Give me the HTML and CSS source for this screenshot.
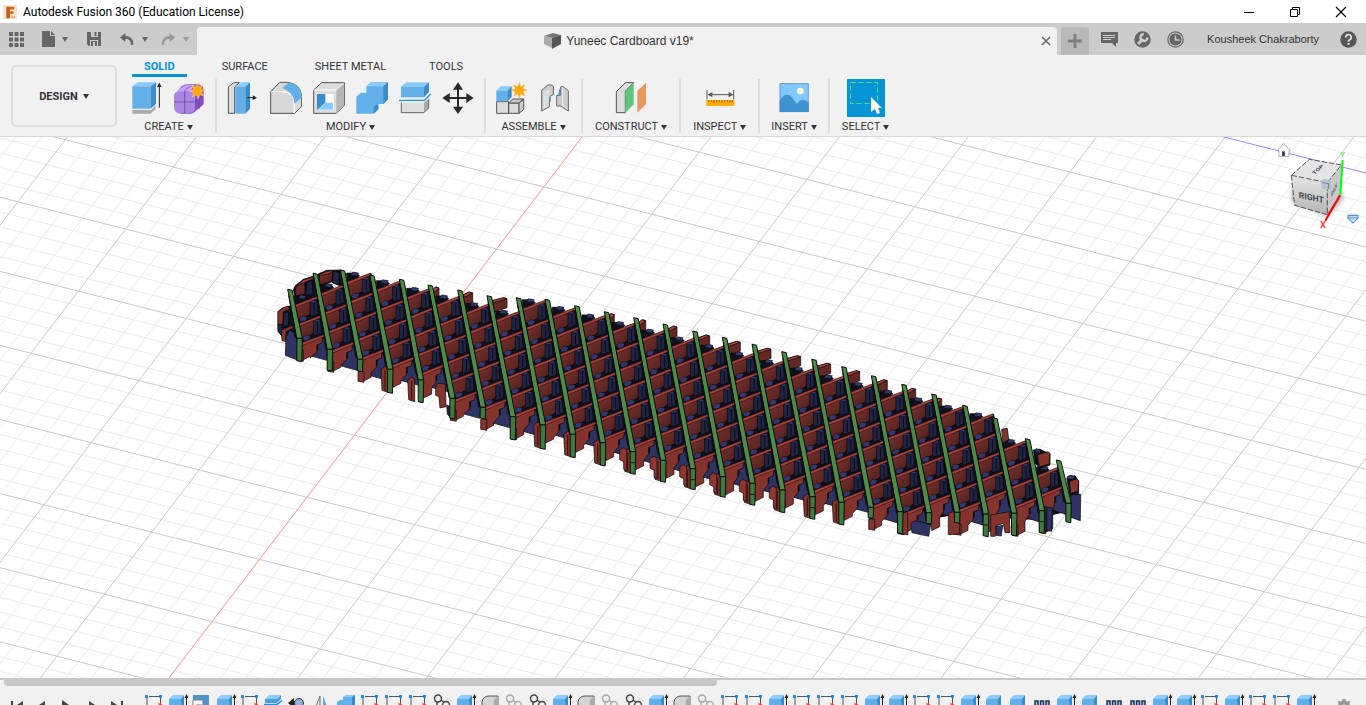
FILE: index.html
```html
<!DOCTYPE html>
<html lang="en">
<head>
<meta charset="utf-8">
<title>Autodesk Fusion 360 (Education License)</title>
<link rel="stylesheet" href="styles.css">
</head>
<body>
<header class="titlebar">
  <svg class="logo" viewBox="0 0 16 16"><rect width="16" height="16" fill="#fbe3cd"/><path d="M4 2h9v3H8v2h4v3H8v5H4z" fill="#d2691a"/><path d="M4 2h3v13H4z" fill="#b8601c"/><path d="M9 13h5v2H9z" fill="#f0a868"/></svg>
  <h1 class="app-name">Autodesk Fusion 360 (Education License)</h1>
  <div class="window-buttons">
    <button class="window-button" aria-label="Minimize"><svg viewBox="0 0 12 12"><path d="M1 6.5h10" stroke="#000"/></svg></button>
    <button class="window-button" aria-label="Restore"><svg viewBox="0 0 12 12" fill="none" stroke="#000"><path d="M1.5 3.5h7v7h-7zM3.500 3V1.500h7v7H9"/></svg></button>
    <button class="window-button" aria-label="Close"><svg viewBox="0 0 12 12"><path d="M1 1l10 10M11 1L1 11" stroke="#000" stroke-width="1.100"/></svg></button>
  </div>
</header>

<div class="tabstrip">
  <div class="quick">
    <button class="quick-button" aria-label="Data panel"><svg width="15" height="15" viewBox="0 0 15 15" fill="#666"><path d="M0 0h4v4H0zM5.500 0h4v4h-4zM11 0h4v4h-4zM0 5.500h4v4H0zM5.500 5.500h4v4h-4zM11 5.500h4v4h-4zM0 11h4v4H0zM5.500 11h4v4h-4zM11 11h4v4h-4z"/></svg></button>
    <button class="quick-button file" aria-label="File"><svg width="13" height="16" viewBox="0 0 13 16" fill="#666"><path d="M0 0h8v5h5v11H0zM9 0l4 4H9z"/></svg><span class="caret"></span></button>
    <button class="quick-button save" aria-label="Save"><svg width="14" height="14" viewBox="0 0 14 14"><path d="M0 0h14v14H2l-2-2z" fill="#666"/><path d="M4 0h7v5H4zM3 8h8v6H3z" fill="#ccc"/><path d="M7.500 0h2v4h-2zM4 9h6v5H4z" fill="#666"/><path d="M6 10h2v4H6z" fill="#ccc"/></svg></button>
    <button class="quick-button undo" aria-label="Undo"><svg width="14" height="12" viewBox="0 0 14 12"><path d="M5.500 0L0 4.500 5.500 9V6C9 5.500 11 8 11 12h2.300C13.800 6 10 3 5.500 3z" fill="#666"/></svg><span class="caret"></span></button>
    <button class="quick-button redo" aria-label="Redo"><svg width="14" height="12" viewBox="0 0 14 12"><path d="M8.500 0L14 4.500 8.500 9V6C5 5.500 3 8 3 12H.7C.2 6 4 3 8.500 3z" fill="#999"/></svg><span class="caret"></span></button>
  </div>
  <div class="doc-tab">
    <svg class="doc-icon" width="17" height="16" viewBox="0 0 17 16"><path d="M0 3L9 0l8 2-9 3z" fill="#777"/><path d="M0 3l8 2v10L0 11z" fill="#aaa"/><path d="M8 5l9-3v9l-9 5z" fill="#555"/></svg>
    <span class="doc-name">Yuneec Cardboard v19*</span>
    <button class="doc-close" aria-label="Close document"><svg width="10" height="10" viewBox="0 0 10 10"><path d="M1 1l8 8M9 1L1 9" stroke="#666" stroke-width="1.500"/></svg></button>
  </div>
  <button class="new-tab" aria-label="New design"><svg width="14" height="14" viewBox="0 0 14 14"><path d="M7 0v14M0 7h14" stroke="#808080" stroke-width="3"/></svg></button>
  <div class="account">
    <button class="round" aria-label="Comments"><svg width="17" height="16" viewBox="0 0 17 16"><path d="M0 1h17v11h-2v4l-4-4H0z" fill="#666"/><path d="M2 4.500h12M2 6.500h12M2 8.500h8" stroke="#ccc"/></svg></button>
    <button class="round" aria-label="Extensions"><svg width="17" height="17" viewBox="0 0 17 17"><circle cx="8.500" cy="8.500" r="8.200" fill="#666"/><path d="M4 13l5-5" stroke="#ccc" stroke-width="3"/><path d="M9.800 3a3.500 3.500 0 1 0 3.700 3.500" fill="none" stroke="#ccc" stroke-width="2.500"/></svg></button>
    <button class="round" aria-label="Job status"><svg width="17" height="17" viewBox="0 0 17 17"><circle cx="8.500" cy="8.500" r="7.700" fill="none" stroke="#666" stroke-width="1.200"/><circle cx="8.500" cy="8.500" r="6.100" fill="#666"/><path d="M8.500 4.500v4.500h4" fill="none" stroke="#ccc" stroke-width="1.500"/></svg></button>
    <button class="user">Kousheek Chakraborty</button>
    <button class="round" aria-label="Help"><svg width="17" height="17" viewBox="0 0 17 17"><circle cx="8.500" cy="8.500" r="8.200" fill="#555"/><path d="M5.800 6.500a2.700 2.700 0 1 1 4 2.200q-1.300.7-1.300 2M8.500 12v2" fill="none" stroke="#ddd" stroke-width="1.900"/></svg></button>
  </div>
</div>

<div class="ribbon">
  <button class="workspace">DESIGN <span class="caret"></span></button>
  <div class="ribbon-main">
    <nav class="ribbon-tabs">
      <button class="ribbon-tab active">SOLID</button>
      <button class="ribbon-tab">SURFACE</button>
      <button class="ribbon-tab">SHEET METAL</button>
      <button class="ribbon-tab">TOOLS</button>
    </nav>
    <div class="groups">
      <section class="group">
        <div class="tools">
          <button class="tool" aria-label="Extrude"><svg viewBox="393 240 96 108"><path d="M397 330h56l14-13v10l-16 14h-54z" fill="#aaa"/><path d="M397 324h52v5h-52z" fill="#e8e8e8"/><path d="M397 259l16-12h55l-16 12z" fill="#8acbff"/><path d="M397 259h55v67h-55z" fill="#63afe8"/><path d="M452 259l16-12v65l-16 14z" fill="#398bc9"/><path d="M478 323v-68" stroke="#222" stroke-width="3"/><path d="M478 248l7 13h-14z" fill="#222"/></svg></button>
          <button class="tool" aria-label="Create form"><svg viewBox="522 240 96 108"><path d="M523 285l22-26q7-6 18-6h30q18 0 18 20v40l-28 24q-5 4-10 4h-30q-20 0-20-22z" fill="#8250c0"/><path d="M523 283q2-10 25-11h24q13 0 13 15v34q0 18-17 18h-28q-17 0-17-18z" fill="#a986e4"/><path d="M530 275l20-17q10-5 34-3l-12 17z" fill="#cba2ff"/><path d="M523 306h60l27-20M554 272v68M554 272l20-16M585 284l22-18M597 277v50" fill="none" stroke="#60369b" stroke-width="2"/><path d="M592 247l4 13 12-7-5 13 14 4-13 6 8 12-13-4-4 14-6-13-13 6 5-13-13-5 13-5-6-13 13 6z" fill="#ffaa08" stroke="#fff4dd" stroke-width="1"/></svg></button>
        </div>
        <button class="group-name">CREATE<span class="caret"></span></button>
      </section>
      <section class="group">
        <div class="tools">
          <button class="tool" aria-label="Press pull"><svg viewBox="684 240 96 108"><path d="M688 261l16-13h17l-14 13v79h-19z" fill="#ddd" stroke="#555" stroke-width="3"/><path d="M709 260l17-13h27l-14 13z" fill="#8acbff"/><path d="M709 260h30v81h-30z" fill="#63afe8"/><path d="M739 260l14-13v79l-14 15z" fill="#398bc9"/><path d="M745 293h19" stroke="#222" stroke-width="3"/><path d="M774 293l-13-7v14z" fill="#222"/></svg></button>
          <button class="tool" aria-label="Fillet"><svg viewBox="813 240 96 108"><path d="M815 275l27-28h24q39 5 42 42v30l-21 21h-72z" fill="#d8d8d8" stroke="#555" stroke-width="3"/><path d="M817 275h35q34 3 34 36v28" fill="none" stroke="#fff" stroke-width="4"/><path d="M849 264l20-16q37 5 40 44l-22 19q-5-38-38-47z" fill="#63afe8"/></svg></button>
          <button class="tool" aria-label="Shell"><svg viewBox="942 240 96 108"><path d="M944 270l24-22h68v68l-24 24h-68z" fill="#ddd" stroke="#555" stroke-width="3"/><path d="M1012 270l23-21v67l-23 23z" fill="#b5b5b5"/><path d="M944 270h68l22-21" fill="none" stroke="#fff" stroke-width="3"/><path d="M954 282h50v48h-50z" fill="#fff"/><path d="M954 282h25v26l-25 22z" fill="#398bc9"/><path d="M979 308h23v21h-46z" fill="#8acbff"/></svg></button>
          <button class="tool" aria-label="Combine"><svg viewBox="1071 240 96 108"><path d="M1072 290l14-12h16v-19l14-12h51v51l-14 14h-15v16l-14 13h-52z" fill="#63afe8"/><path d="M1102 259l14-12h51l-14 12z" fill="#8acbff"/><path d="M1153 259l14-12v51l-14 14zM1124 321l14-10v17l-14 13z" fill="#398bc9"/></svg></button>
          <button class="tool" aria-label="Split body"><svg viewBox="1200 240 96 108"><path d="M1207 308h68v30h-68z" fill="#ddd"/><path d="M1275 308l14-10v25l-14 15z" fill="#aaa"/><path d="M1207 307v31h68l14-14v-26" fill="none" stroke="#666" stroke-width="3"/><path d="M1206 260l16-13h68l-15 13z" fill="#8acbff"/><path d="M1206 260h69v32h-69z" fill="#63afe8"/><path d="M1275 260l15-13v28l-15 17z" fill="#398bc9"/><path d="M1200 301h77l18-19" fill="none" stroke="#1c92e8" stroke-width="4"/></svg></button>
          <button class="tool" aria-label="Move"><svg viewBox="9 240 96 108"><path d="M57 260v66M25 294h66" stroke="#2a2a2a" stroke-width="6"/><path d="M57 247l15 22H42zM57 342l15-22H42zM10 294l22-15v30zM104 294l-22-15v30z" fill="#2a2a2a"/></svg></button>
        </div>
        <button class="group-name">MODIFY<span class="caret"></span></button>
      </section>
      <section class="group">
        <div class="tools">
          <button class="tool" aria-label="New component"><svg viewBox="171 240 96 108"><path d="M173 305h36v35h-36zM209 309h31v31h-31z" fill="#ddd" stroke="#555" stroke-width="3"/><path d="M209 309l12-12h33l-14 12zM240 309l14-12v32l-14 11z" fill="#ccc" stroke="#555" stroke-width="3"/><path d="M172 272l13-13h32l-12 13z" fill="#8acbff"/><path d="M172 272h33v32h-33z" fill="#63afe8"/><path d="M205 272l13-13v32l-13 13z" fill="#398bc9"/><path d="M241 246l4 14 13-7-6 13 14 4-14 5 7 14-14-7-4 14-5-14-13 7 6-14-14-5 14-4-7-13 14 7z" fill="#ffaa08"/></svg></button>
          <button class="tool" aria-label="Joint"><svg viewBox="300 240 96 108"><path d="M308 271l20-17q14 0 15 6v24l-12 6v30l-23 13z" fill="#ccc" stroke="#666" stroke-width="3"/><path d="M313 274l18-5v20l-4 31-14 7z" fill="#ddd"/><path d="M388 272l-17-13-6 2v24l-12 2v31h12l23 15z" fill="#ccc" stroke="#666" stroke-width="3"/><path d="M371 263v55l15 9" fill="none" stroke="#fff" stroke-width="2"/><path d="M334 305v-14M361 286v-18M356 282h10" stroke="#1c92e8" stroke-width="3"/></svg></button>
        </div>
        <button class="group-name">ASSEMBLE<span class="caret"></span></button>
      </section>
      <section class="group">
        <div class="tools">
          <button class="tool" aria-label="Construct plane"><svg viewBox="528 240 96 108"><path d="M532 275l28-27h24l-25 25v65h-27z" fill="#ddd" stroke="#555" stroke-width="3"/><path d="M559 273l25-25v65l-25 25z" fill="#5cc57b"/><path d="M595 273l26-25v65l-26 25z" fill="#e59860"/></svg></button>
        </div>
        <button class="group-name">CONSTRUCT<span class="caret"></span></button>
      </section>
      <section class="group">
        <div class="tools">
          <button class="tool" aria-label="Measure"><svg viewBox="794 240 96 108"><path d="M803 270v28M883 270v28M812 284h62" stroke="#555" stroke-width="3"/><path d="M805 284l14-8v16zM882 284l-14-8v16z" fill="#555"/><path d="M801 300h84v18h-84z" fill="#ffaa08"/><path d="M808 300v6M816 300v6M824 300v9M832 300v6M840 300v6M848 300v9M856 300v6M864 300v6M872 300v9M879 300v6" stroke="#7a5300" stroke-width="2"/></svg></button>
        </div>
        <button class="group-name">INSPECT<span class="caret"></span></button>
      </section>
      <section class="group">
        <div class="tools">
          <button class="tool" aria-label="Insert image"><svg viewBox="1015 240 96 108"><path d="M1020 250h87v86h-87z" fill="#80c8ff"/><path d="M1020 302q22-35 44 0l8 10q16-24 35-4v28h-87z" fill="#3d92cf"/><circle cx="1082" cy="273" r="10" fill="#ffffd0"/><path d="M1021 251h85v84h-85z" fill="none" stroke="#4f8fbd" stroke-width="2"/></svg></button>
        </div>
        <button class="group-name">INSERT<span class="caret"></span></button>
      </section>
      <section class="group">
        <div class="tools">
          <button class="tool selected" aria-label="Select"><svg viewBox="0 0 38 38"><path d="M3.500 3.500h27v21h-27z" fill="none" stroke="#5fd977" stroke-dasharray="5 3"/><path d="M24 18v15l4-3 2 5 3-1-2-5h4z" fill="#fff"/></svg></button>
        </div>
        <button class="group-name">SELECT<span class="caret"></span></button>
      </section>
    </div>
  </div>
</div>

<main class="viewport">
  <svg class="scene" viewBox="0 137 1366 541" preserveAspectRatio="xMidYMid slice" role="img" aria-label="Cardboard lattice model">
    <defs>
      <linearGradient id="slat" x1="0" y1="0" x2="1" y2="1"><stop offset="0" stop-color="#80352e"/><stop offset="1" stop-color="#451b19"/></linearGradient>
      <linearGradient id="cubeFace" x1="0" y1="0" x2="0" y2="1"><stop offset="0" stop-color="#e6e6e6"/><stop offset="1" stop-color="#b4b4b4"/></linearGradient>
      <filter id="soft" x="-20%" y="-20%" width="140%" height="150%"><feGaussianBlur stdDeviation="9"/></filter>
    </defs>
    <g id="grid"></g>
    <g id="model" stroke-linejoin="round"></g>
    <g id="viewcube" transform="translate(900 0) scale(.3333)">
      <path d="M1178 600l104 44 44-50-20-40h-120z" fill="#555" filter="url(#soft)" opacity=".8"/>
      <path d="M1174 526l54-48 96 17-42 53z" fill="#e4e4e4"/>
      <path d="M1174 526l108 22v96l-98-28z" fill="url(#cubeFace)"/>
      <path d="M1282 548l42-53-4 92-38 57z" fill="#c9c9c9"/>
      <path d="M1174 526l54-48 96 17-42 53zM1174 526l10 90 98 28v-96M1282 644l38-57" fill="none" stroke="#555" stroke-width="3" stroke-dasharray="16 6"/>
      <path d="M1263 542l10-6 20 4v22l-7 8-21-4z" fill="#b4c0d4" opacity=".9"/><path d="M1268 548l18 3v16" fill="none" stroke="#567" stroke-width="2"/>
      <text class="cube-label" transform="matrix(1 .2 0 1 1196 594)">RIGHT</text>
      <text class="cube-small" transform="matrix(.7 -.6 .5 .4 1243 524)">TOP</text>
      <text class="cube-small" transform="matrix(.3 -.55 0 1 1294 592)">BACK</text>
      <path d="M1328 480l-7 104" stroke="#0f0" stroke-width="6"/><path d="M1320 586l-44 76" stroke="#f00" stroke-width="6"/>
      <text class="axis-y" x="1320" y="471">Y</text><text class="axis-x" x="1260" y="683">X</text>
      <path d="M1133 452l18-22 20 22h-4v18h-30v-18z" fill="#fff" stroke="#888" stroke-width="2"/><path d="M1146 454h9v14h-9z" fill="#445"/>
      <path d="M1344 646h30v9l-15 15-15-15z" fill="#b5daf7" stroke="#3f80b8" stroke-width="3"/><path d="M1344 654h30" stroke="#3f80b8" stroke-width="2"/>
    </g>
  </svg>
</main>

<footer class="timeline">
  <div class="scroll-thumb"></div>
  <div class="timeline-row">
    <div class="playback">
      <button class="play" aria-label="Go to start"><svg viewBox="0 0 14 14"><path d="M1 1h2v12H1zM13 1v12L4 7z"/></svg></button>
      <button class="play" aria-label="Step back"><svg viewBox="0 0 14 14"><path d="M10 1v12L1 7z"/></svg></button>
      <button class="play" aria-label="Play"><svg viewBox="0 0 14 14"><path d="M2 0v14L12 7z"/></svg></button>
      <button class="play" aria-label="Step forward"><svg viewBox="0 0 14 14"><path d="M4 1v12l9-6z"/></svg></button>
      <button class="play" aria-label="Go to end"><svg viewBox="0 0 14 14"><path d="M11 1h2v12h-2zM1 1v12l9-6z"/></svg></button>
    </div>
    <div class="features" id="features"></div>
    <button class="settings" aria-label="Timeline settings"><svg width="16" height="16" viewBox="0 0 16 16"><circle cx="8" cy="8" r="4.500" fill="none" stroke="#999" stroke-width="4"/><path d="M8 0v16M0 8h16M2.300 2.300l11.400 11.400M13.700 2.300L2.300 13.700" stroke="#999" stroke-width="2.500" stroke-dasharray="3 100"/><path d="M8 0v3" stroke="#999" stroke-width="3"/></svg></button>
  </div>
</footer>
<script src="viewport.js"></script>
</body>
</html>
```

FILE: styles.css
```css
* { box-sizing: border-box; }
body {
  margin: 0;
  height: 100vh;
  overflow: hidden;
  display: flex;
  flex-direction: column;
  background: #fff;
  color: #333;
  font-family: Roboto, "Liberation Sans", sans-serif;
  font-size: 11px;
}
button {
  border: 0;
  padding: 0;
  background: none;
  color: inherit;
  font: inherit;
}
svg { display: block; }
.caret {
  display: inline-block;
  border: 3px solid transparent;
  border-top: 5px solid currentColor;
  border-bottom: 0;
}

.titlebar {
  flex: none;
  height: 23px;
  display: flex;
  align-items: center;
  padding-left: 3px;
}
.logo { width: 14px; height: 16px; }
.app-name {
  margin: 0 0 0 6px;
  color: #000;
  font-size: 12px;
  font-weight: 400;
}
.window-buttons {
  display: flex;
  margin-left: auto;
  margin-right: 2px;
}
.window-button {
  width: 46px;
  height: 20px;
  display: flex;
  align-items: center;
  justify-content: center;
}
.window-button svg { width: 12px; height: 12px; }

.tabstrip {
  flex: none;
  height: 32px;
  display: flex;
  align-items: flex-end;
  background: #ccc;
  font-family: "Liberation Sans", sans-serif;
}
.quick {
  width: 197px;
  height: 32px;
  display: flex;
  align-items: center;
  padding-left: 9px;
  color: #666;
}
.quick-button {
  display: flex;
  align-items: center;
  gap: 7px;
}
.file { margin-left: 18px; }
.save { margin-left: 19px; }
.undo { margin-left: 19px; gap: 8px; }
.redo { margin-left: 13px; gap: 8px; color: #999; }
.doc-tab {
  flex: 1;
  height: 28px;
  display: flex;
  align-items: center;
  justify-content: center;
  position: relative;
  background: #f1f1f1;
  border-radius: 4px 4px 0 0;
  font-size: 12px;
}
.doc-name { margin-left: 5px; margin-right: 16px; }
.doc-close {
  position: absolute;
  right: 6px;
  top: 9px;
}
.new-tab {
  width: 28px;
  height: 28px;
  margin-left: 4px;
  display: flex;
  align-items: center;
  justify-content: center;
  background: #b8b8b8;
  border-radius: 4px 4px 0 0;
}
.account {
  height: 32px;
  display: flex;
  align-items: center;
  gap: 16px;
  padding: 0 9px 0 12px;
}
.user { padding: 0 8px 0 7px; margin-right: -3px; }

.ribbon {
  flex: none;
  height: 82px;
  display: flex;
  background: #f1f1f1;
  border-bottom: 1px solid #d8d8d8;
}
.workspace {
  width: 106px;
  height: 62px;
  margin: 10px 14px 0 11px;
  display: flex;
  align-items: center;
  justify-content: center;
  gap: 5px;
  border: 2px solid #ddd;
  border-radius: 5px;
  font-weight: 700;
}
.ribbon-tabs {
  display: flex;
  gap: 23px;
}
.ribbon-tab {
  height: 22px;
  padding: 3px 12px 0;
  border-bottom: 3px solid transparent;
}
.ribbon-tab:last-child { padding-left: 8px; }
.ribbon-tab.active {
  margin-left: 1px;
  color: #0696d7;
  border-bottom-color: #0696d7;
  font-weight: 700;
}
.groups {
  display: flex;
  margin-top: 2px;
}
.group {
  height: 54px;
  padding: 0 12px;
  display: flex;
  flex-direction: column;
  align-items: center;
  border-right: 2px solid #ddd;
}
.group:nth-child(-n+3) { padding: 0 10px; }
.group:first-child { padding: 0 9px 0 0; }
.group:nth-last-child(2) { padding: 0 11px; }
.group:last-child { border-right: 0; }
.tools {
  flex: none;
  height: 38px;
  display: flex;
  align-items: center;
  gap: 11px;
}
.tool svg { width: 32px; height: 36px; }
.tool.selected { background: #0696d7; }
.tool.selected svg { width: 38px; height: 38px; }
.group-name {
  flex: none;
  display: flex;
  align-items: center;
  gap: 3px;
  height: 14px;
  margin-top: 3px;
  line-height: 14px;
}

.viewport {
  flex: 1;
  min-height: 0;
  background: #fff;
}
.scene { width: 100%; height: 100%; }
.cube-label { font: 700 26px Roboto, sans-serif; fill: #444c58; }
.cube-small { font: 700 22px Roboto, sans-serif; fill: #444c58; }
.axis-y { font: 700 24px Roboto, sans-serif; fill: #5fee5f; }
.axis-x { font: 700 28px Roboto, sans-serif; fill: #f44; }

.timeline {
  flex: none;
  height: 27px;
  overflow: hidden;
  background: #f1f1f1;
  border-top: 2px solid #c8c8c8;
}
.scroll-thumb {
  width: 52.2%;
  height: 6px;
  margin-left: 4px;
  background: #c8c8c8;
  border-radius: 0 0 4px 4px;
}
.timeline-row {
  display: flex;
  align-items: flex-start;
  padding: 8px 14px 0 10px;
}
.playback {
  display: flex;
  gap: 11px;
  padding-top: 6px;
}
.play svg { width: 14px; height: 14px; fill: #444; }
.features {
  display: flex;
  flex: 1;
  margin-left: 18px;
}
.feature { width: 24px; }
.feature svg { width: 20px; height: 20px; margin-left: 2px; }
.settings { padding-top: 5px; }
```

FILE: viewport.js
```js
const NS = 'http://www.w3.org/2000/svg';

function poly(parent, points, fill, stroke = '#08080c', width = 0.7) {
  const p = document.createElementNS(NS, 'polygon');
  p.setAttribute('points', points.map(q => q.map(n => n.toFixed(1)).join()).join(' '));
  p.setAttribute('fill', fill);
  if (stroke) {
    p.setAttribute('stroke', stroke);
    p.setAttribute('stroke-width', width);
  }
  parent.appendChild(p);
}

function line(parent, x1, y1, x2, y2, color) {
  const l = document.createElementNS(NS, 'line');
  Object.entries({ x1, y1, x2, y2, stroke: color }).forEach(([k, v]) => l.setAttribute(k, v));
  parent.appendChild(l);
}

/* Ground grid: five minor cells to each major cell */
const grid = document.getElementById('grid');
function gridLines(major) {
  for (let k = -25; k <= 65; k++) {
    if ((k % 5 === 0) !== major) continue;
    const x = 582 + 25.73 * k;
    line(grid, x, 137, x - 413, 678, k === 0 ? '#ff8f8f' : major ? '#cacaca' : '#ececec');
  }
  for (let k = -5; k <= 62; k++) {
    if ((k % 5 === 0) !== major) continue;
    const c = -173.3 + 14.82 * k;
    line(grid, 0, c, 1366, c + 346.3, k === 0 ? '#8f8fff' : major ? '#cacaca' : '#ececec');
  }
}
gridLines(false);
gridLines(true);

/* Green ribs: top x, top y, bend x, bend y, bottom y */
const ribs = [
  [290.7, 289.3, 299.3, 338.3, 361.7], [316, 273.3, 329.7, 349.3, 371], [343.3, 270, 360, 359.3, 371.7],
  [372.7, 275, 390, 369.3, 393.3], [402.3, 279.3, 420.7, 380, 402.7], [431, 285, 452.3, 398.3, 419],
  [460.7, 290, 482.7, 407.3, 419], [490, 295.7, 512.7, 416.7, 440], [519.3, 297.7, 542.7, 425, 449.3],
  [548, 299.3, 572.7, 434.3, 457.7], [577.7, 305.7, 602.7, 442.7, 466], [607.3, 311.7, 632.7, 451.7, 474.3],
  [636.7, 317.7, 663, 460.3, 482.3], [666, 324, 692.7, 468.7, 489.7], [695.7, 331, 722.7, 476.7, 497.3],
  [725.3, 337.3, 752.3, 483.3, 505.3], [755, 344.3, 782.3, 490, 512.7], [784.7, 351.7, 812.3, 496.7, 519.3],
  [814.7, 359.3, 841.3, 502.3, 525], [844.7, 366.7, 870.7, 507.3, 518.7], [874.3, 375.7, 900, 511.7, 534],
  [904.7, 384.3, 928.7, 512.7, 524.3], [934.7, 394, 957, 512.3, 523.3], [965.7, 405.3, 985.7, 514, 536.7],
  [995.7, 417.7, 1014, 513.3, 536], [1028.3, 438.7, 1041.7, 510.7, 533.3], [1059.3, 460, 1068.3, 503.3, 522.7]
];
const boxReach = { 5: 8, 6: 12, 7: 17, 11: 7, 12: 9, 13: 11, 14: 14, 15: 15, 16: 16, 17: 16, 18: 16, 19: 15, 20: 13, 21: 11, 22: 7 };
const deepFront = new Set([0, 1, 2, 5, 6, 7, 19, 20, 22, 24, 25]);
const posts = new Set([3, 4, 8, 9, 10, 11, 12, 13, 14, 15, 16, 17, 18]);

const RED = '#a94038', FRONT = '#84332d', NAVY = '#212446', NAVY_TOP = '#333970', BLUE = '#2f3364', DARK = '#10101c';
const model = document.getElementById('model');
const ribX = (r, y) => r[0] + (r[2] - r[0]) * (y - r[1]) / (r[3] - r[1]);

/* Polygon given in thirds of a pixel from an origin */
const local = (ox, oy) => (pts, fill) => poly(model, pts.map(([x, y]) => [ox + x / 3, oy + y / 3]), fill);
const west = local(260, 250), east = local(820, 330);

/* Rounded west end */
west([[54, 185], [66, 175], [90, 168], [110, 215], [112, 262], [76, 275], [54, 240]], DARK);
west([[54, 185], [66, 175], [86, 168], [88, 178], [70, 186], [68, 222], [54, 228]], FRONT);
west([[54, 222], [66, 224], [66, 258], [54, 245]], NAVY);
west([[72, 190], [86, 184], [86, 225], [70, 230]], NAVY);
west([[64, 240], [98, 226], [100, 234], [78, 245], [78, 275], [66, 272]], FRONT);
west([[78, 262], [88, 240], [102, 246], [104, 262], [116, 266], [112, 330], [76, 316]], BLUE);
west([[100, 120], [105, 108], [130, 88], [162, 78], [186, 180], [120, 200]], DARK);
west([[107, 110], [130, 90], [160, 80], [160, 88], [134, 100], [136, 132], [107, 138]], 'url(#slat)');
west([[107, 110], [130, 90], [160, 80], [160, 86], [134, 97]], RED);
west([[140, 98], [156, 92], [158, 132], [138, 136]], NAVY);
west([[108, 142], [122, 138], [128, 146], [114, 152]], NAVY_TOP);
west([[174, 72], [200, 61], [244, 60], [262, 120], [240, 108], [214, 96], [186, 108], [198, 140], [186, 140]], DARK);
west([[178, 74], [200, 64], [218, 62], [216, 94], [180, 104]], 'url(#slat)');
west([[178, 74], [200, 64], [218, 62], [214, 68], [188, 76]], RED);
west([[220, 64], [238, 68], [236, 104], [218, 98]], NAVY);

for (let i = 0; i < ribs.length - 1; i++) {
  const a = ribs[i], b = ribs[i + 1];
  const phase = 280.7 + 7.6 * (i - 3);
  let first = Math.ceil((b[1] - 5 - phase) / 19);
  let last = Math.floor((b[3] - 7 - phase) / 19);
  if (i === 0) first = 2;
  if (i === 1) first = 1;
  if (i === 4) last = 4;
  const baseY = i === 4 ? 387 : b[3];
  const edge = j => {
    const yr = phase + 19 * j, yl = yr + 9;
    return { yr, yl, xr: ribX(b, yr) - 1, xl: ribX(a, yl) + 1 };
  };

  if (boxReach[i]) {
    const x = a[0] + 2, r = a[0] + boxReach[i], y = a[1] + (i > 13 ? 4 : 2);
    poly(model, [[x, y + 3], [r - 3, y], [r, y + 1], [r, y + 10], [x, y + 15]], '#642823');
    poly(model, [[x, y + 3], [r - 4, y], [r, y + 1], [x + 2, y + 5]], RED);
  }

  const e0 = edge(first);
  poly(model, [[e0.xl, e0.yl - 9], [e0.xl + 10, e0.yl - 9], [e0.xl + 13, e0.yl - 6], [e0.xl, e0.yl + 4]], DARK);
  poly(model, [[e0.xl + 4, e0.yl - 7], [e0.xl + 6, e0.yl - 10], [e0.xl + 12, e0.yl - 9], [e0.xl + 10, e0.yl - 6]], NAVY_TOP, '#08080c', 0.5);

  for (let j = first; j < last; j++) {
    const { xl, yl, xr, yr } = edge(j);
    poly(model, [[xl, yl], [xr, yr], [xr + 4, yr + 22], [xl + 4, yl + 22]], DARK, null);
    poly(model, [[xl + 1, yl + 1], [xr - 3, yr + 2], [xr - 7, yr + 17], [xl + 9, yl + 13], [xl + 3, yl + 15]], 'url(#slat)');
    poly(model, [[xr - 9, yr + 6], [xr - 7, yr + 4], [xr - 2, yr + 5], [xr - 1, yr + 18], [xr - 9, yr + 21]], NAVY);
    poly(model, [[xr - 9, yr + 6], [xr - 7, yr + 4], [xr - 2, yr + 5], [xr - 4, yr + 7]], NAVY_TOP, '#08080c', 0.5);
    line(model, xr - 5, yr + 7, xr - 5, yr + 18, '#0c0c16');
    poly(model, [[xl + 5, yl + 14], [xl + 8, yl + 11], [xl + 13, yl + 12], [xl + 11, yl + 16], [xl + 6, yl + 17]], NAVY_TOP, '#08080c', 0.5);
    poly(model, [[xl, yl], [xr - 1, yr], [xr, yr + 2], [xl + 1, yl + 2.8]], RED, '#08080c', 0.5);
  }

  /* Front faces */
  const { xl, yl, xr, yr } = edge(last);
  const deep = deepFront.has(i);
  const floor = baseY + (deep ? 11 : 5);
  poly(model, [[xl, yl], [xr, yr], [b[2], baseY], [b[2] - 4, floor - 2], [a[2] + 4, a[3] + 6]], DARK, null);
  poly(model, [[xr - 8, yr + 5], [xr - 2, yr + 4], [xr, yr + 16], [b[2] - 2, baseY - 2], [b[2] - 3, floor], [a[2] + 9, floor - 5], [a[2] + 10, yl + 10], [xr - 8, yr + 16]], BLUE);
  poly(model, [[xr - 8, yr + 5], [xr - 2, yr + 4], [xr - 4, yr + 7]], NAVY_TOP, '#08080c', 0.5);
  const rb = a[3] + (deep ? 22 : 18);
  poly(model, [[xl + 1, yl + 1], [xr - 3, yr + 2], [xr - 4, yr + 9], [xr - 9, yr + 11], [xr - 9, yr + 18], [a[2] + 11, Math.max(yl + 15, yr + 19)], [a[2] + 11, rb - 4], [a[2] + 3, rb], [a[2] + 2, a[3]]], FRONT);
  poly(model, [[xl, yl], [xr - 1, yr], [xr, yr + 2], [xl + 1, yl + 2.8]], RED, '#08080c', 0.5);
  if (deep) poly(model, [[a[2] - 2, a[3] + 12], [a[2] + 4, a[3] + 12], [a[2] + 4, rb + 1], [a[2] - 2, rb]], FRONT);
}

west([[527, 408], [535, 400], [556, 402], [558, 470], [540, 474], [537, 440], [527, 436]], FRONT);
west([[560, 465], [572, 470], [575, 508], [562, 492]], NAVY);

/* East end */
east([[545, 298], [562, 295], [566, 330], [548, 338]], FRONT);
east([[640, 360], [660, 358], [690, 372], [690, 405], [660, 415], [645, 400]], DARK);
east([[642, 362], [648, 356], [664, 360], [658, 370]], NAVY_TOP);
east([[652, 375], [684, 365], [690, 370], [688, 402], [658, 410]], FRONT);
east([[740, 445], [765, 437], [776, 455], [776, 495], [750, 500]], DARK);
east([[742, 440], [750, 436], [766, 439], [760, 448], [744, 448]], NAVY_TOP);
east([[748, 455], [770, 446], [776, 452], [774, 484], [752, 490]], FRONT);
east([[752, 495], [782, 493], [781, 572], [752, 562]], BLUE);
east([[672, 530], [697, 533], [695, 604], [672, 600]], BLUE);
east([[672, 530], [680, 533], [680, 602], [672, 600]], NAVY);
east([[272, 580], [286, 572], [332, 583], [326, 619], [276, 608]], BLUE);
east([[246, 550], [262, 545], [264, 614], [246, 612]], FRONT);
east([[385, 548], [400, 545], [420, 550], [418, 612], [385, 614]], FRONT);
east([[512, 555], [568, 545], [570, 608], [555, 608], [550, 580], [528, 588], [526, 619], [512, 619]], FRONT);
east([[528, 590], [548, 586], [544, 618], [528, 616]], BLUE);

ribs.forEach((r, i) => {
  const [x, y, bx, by, end] = r;
  if (posts.has(i)) {
    const px = i === 4 ? bx - 4 : bx;
    const stepped = i >= 11 && i < 17;
    poly(model, [[px - 9, by], [px - 5, by - 3], [px - 2, by - 1], [px - 2, end - 1], [px - 8, end - 3]], FRONT);
    if (stepped) poly(model, [[px - 13, by - 2], [px - 9, by - 4], [px - 6, by - 2], [px - 6, end - 4], [px - 9, end - 5], [px - 9, by + 10], [px - 13, by + 8]], '#8f362f');
    line(model, px - 5, by + 1, px - 5, end - 3, '#30100e');
  }
  poly(model, [[x - 3, y], [x + 1.5, y + 1], [bx + 3, by], [bx - 2.5, by]], '#4f8a4b', '#071007', 1);
  line(model, x - 2, y + 6, bx - 3, by, '#0c0c12');
  poly(model, [[bx - 2.5, by], [bx + 3, by], [bx + 2.5, end], [bx - 2.5, end - 1]], '#417a3f', '#071007', 1);
  if (i > 10 && i % 2) line(model, bx - 2, by + 11, bx + 2, by + 11, '#071007');
});

/* Timeline features */
const box = '<path d="M1 5l4-4h11l-3 4z" fill="#8acbff"/><path d="M1 5h12v15H1z" fill="#63afe8"/><path d="M13 5l3-4v19h-3z" fill="#398bc9"/>';
const node = c => `<g fill="#eee" stroke="${c}" stroke-width="1.500"><path d="M5 8v8M9 6l5 4"/><circle cx="6" cy="4.500" r="3.500"/><circle cx="14" cy="11" r="3.500"/></g>`;
const icons = {
  s: '<path d="M3 3v17M5 2.500h11M16.500 4v6" stroke="#555" fill="none"/><path d="M1 1h3v3H1zM15 1h3v3h-3z" fill="#1c8fe8"/><path d="M14 9l4 1v9z" fill="#f44"/>',
  e: box + '<path d="M18.500 3v17" stroke="#222"/><path d="M18.500 0l2 4h-4z" fill="#222"/>',
  b: '<g transform="translate(1 0)">' + box + '</g>',
  h: '<path d="M1 1h16v19H1z" fill="#4c96cd"/><path d="M1 6h10v14H1z" fill="#fff" stroke="#777"/><path d="M4 11h6v9H4z" fill="#ccc" stroke="#777"/>',
  p: '<path d="M1 5l4-4h12l-4 4z" fill="#8acbff"/><path d="M1 5h12l4-4v4l-4 4H1z" fill="#4d9edb"/><path d="M0 10.500h13l5-4" stroke="#1c92e8" stroke-width="1.500" fill="none"/><path d="M1 13h12v7H1z" fill="#ccc"/>',
  j: '<path d="M0 9l6-5v3h6v4H6v3z" fill="#222"/><circle cx="11" cy="9" r="4.500" fill="#8fb0d8" stroke="#334"/>',
  m: '<path d="M8 2v18H1z" fill="#ddd" stroke="#777"/><path d="M11 2v18h7z" fill="#5ba8de"/>',
  c: '<path d="M1 8l3-2h3V3l3-2h9v11H9v8H1z" fill="#63afe8"/><path d="M7 3l3-2h9l-3 2z" fill="#8acbff"/><path d="M16 3l3-2v11h-3z" fill="#398bc9"/>',
  f: '<path d="M2 8q1-6 7-6h9v18H2z" fill="#d4d4d4" stroke="#555"/><path d="M14 6l4-4v18h-4z" fill="#aaa"/>',
  l: node('#444'), g: node('#aaa'),
  t: '<path d="M3 7h3v13H3zM8.500 7h3v13h-3zM14 7h3v13h-3z" fill="#9fc3ea" stroke="#1d2f55" stroke-width="1.500"/>'
};
document.getElementById('features').innerHTML = [...'sehespjmcssslefglefglefgssessseessebbtebtteesesse']
  .map(k => `<button class="feature" aria-label="Timeline feature"><svg viewBox="0 0 20 20">${icons[k]}</svg></button>`)
  .join('');
```
